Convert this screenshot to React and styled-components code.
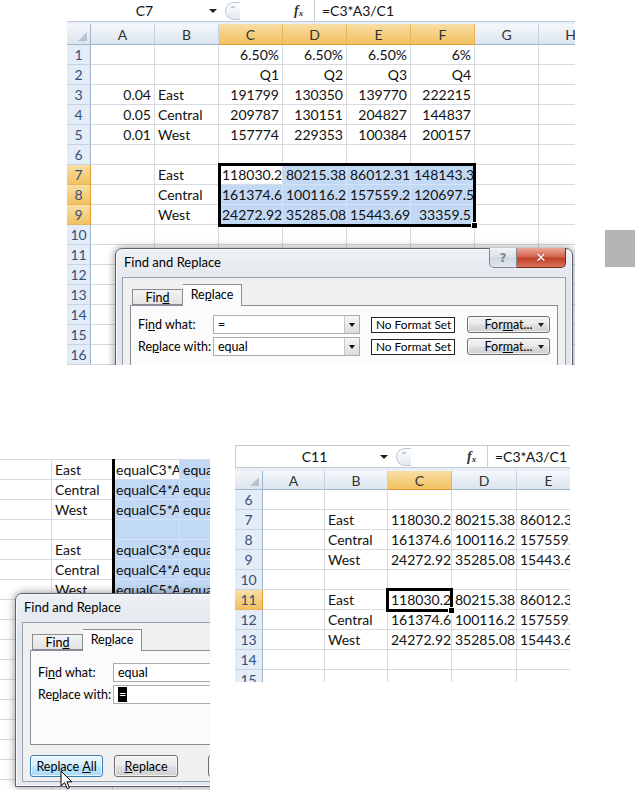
import React from 'react';
import styled, { createGlobalStyle } from 'styled-components';

const GlobalStyle = createGlobalStyle`
  *, *::before, *::after { box-sizing: border-box; }
  html, body { margin: 0; padding: 0; background: #fff; }
  body { font-family: Lato, "Open Sans", sans-serif; }
`;

const Page = styled.div`
  width: 635px;
  height: 790px;
  overflow: hidden;
  background: #fff;
`;

const TopRow = styled.div`
  display: flex;
  align-items: flex-start;
`;

const BottomRow = styled.div`
  display: flex;
  align-items: flex-start;
  margin-top: 80px;
`;

const Shot = styled.div`
  position: relative;
  overflow: hidden;
  flex: none;
  width: ${p => p.$w}px;
  height: ${p => p.$h}px;
  margin-left: ${p => p.$ml || 0}px;
  margin-top: ${p => p.$mt || 0}px;
  background: #e9eef4;
`;

const GrayBlock = styled.div`
  flex: none;
  width: 30px;
  height: 37px;
  margin: 230px 0 0 30px;
  background: #b4b4b4;
`;

/* formula bar */
const FormulaBar = styled.div`
  display: flex;
  align-items: center;
  height: ${p => (p.$framed ? 23 : 22)}px;
  margin-bottom: ${p => (p.$framed ? 3 : 2)}px;
  background: #fff;
  border-top: ${p => (p.$framed ? '1px solid #c3cbd6' : 'none')};
  border-left: ${p => (p.$framed ? '1px solid #c3cbd6' : 'none')};
  border-bottom: 1px solid #c3cbd6;
  font-size: 14px;
  color: #111;
`;

const NameBox = styled.div`
  position: relative;
  flex: none;
  width: ${p => p.$w}px;
  height: 100%;
  display: flex;
  align-items: center;
  justify-content: center;
`;

const NameArrow = styled.span`
  position: absolute;
  right: 5px;
  top: 9px;
  border-left: 4px solid transparent;
  border-right: 4px solid transparent;
  border-top: 4px solid #222;
`;

const Knob = styled.div`
  flex: none;
  width: 15px;
  height: 18px;
  margin-left: 3px;
  border: 1px solid #b9c7d8;
  border-right: none;
  border-radius: 10px 0 0 10px;
  background: linear-gradient(#fdfeff, #e3e9f0);
  position: relative;

  &::after {
    content: '';
    position: absolute;
    left: 5px;
    top: 3px;
    width: 4px;
    height: 2px;
    background: #c3ccd6;
  }
`;

const Fx = styled.div`
  flex: none;
  margin-left: ${p => p.$gap}px;
  width: 16px;
  font-family: "Liberation Serif", serif;
  font-style: italic;
  font-weight: bold;
  font-size: 14px;
  color: #333;

  sub {
    font-size: 9px;
    vertical-align: -1px;
  }
`;

const BarSep = styled.div`
  flex: none;
  width: 1px;
  height: 100%;
  margin: 0 7px 0 4px;
  background: #c8d0da;
`;

/* grid */
const Grid = styled.div`
  position: relative;
  display: grid;
  grid-template-columns: ${p => p.$cols};
  grid-template-rows: ${p => (p.$headH ? `${p.$headH}px` : 'none')};
  grid-auto-rows: 20px;
  border-top: ${p => (p.$headH ? 'none' : '1px solid #d7dadf')};
  background: #fff;
`;

const Corner = styled.div`
  position: relative;
  background: linear-gradient(#f3f6fa, #dde4ee);
  border-right: 1px solid #9eb6ce;
  border-bottom: 1px solid #9eb6ce;

  &::after {
    content: '';
    position: absolute;
    right: 3px;
    bottom: 3px;
    border-left: 9px solid transparent;
    border-bottom: 9px solid #b7c3d1;
  }
`;

const ColHead = styled.div`
  display: flex;
  align-items: center;
  justify-content: center;
  font-size: 14px;
  color: #333;
  background: ${p => (p.$sel ? 'linear-gradient(#f9dea6, #f1c15f)' : 'linear-gradient(#f5f8fc, #dce4ee)')};
  border-right: 1px solid ${p => (p.$sel ? '#e7b45a' : '#c6d3e2')};
  border-bottom: 1px solid ${p => (p.$sel ? '#e29d2e' : '#9eb6ce')};
`;

const RowHead = styled.div`
  display: flex;
  align-items: center;
  justify-content: center;
  font-size: 14px;
  line-height: 19px;
  color: #34507a;
  background: ${p => (p.$sel ? 'linear-gradient(#f9dea6, #f1c15f)' : '#e4ecf7')};
  border-right: 1px solid ${p => (p.$sel ? '#e29d2e' : '#9eb6ce')};
  border-bottom: 1px solid ${p => (p.$sel ? '#e7b45a' : '#c6d3e2')};
`;

const Cell = styled.div`
  padding: 0 3px;
  font-size: 14px;
  line-height: 19px;
  color: #111;
  white-space: nowrap;
  overflow: hidden;
  text-align: ${p => (p.$left ? 'left' : 'right')};
  background: ${p => (p.$fill ? '#c2d9f5' : '#fff')};
  border-right: 1px solid ${p => (p.$fill ? '#d4e3f6' : '#d7dadf')};
  border-bottom: 1px solid ${p => (p.$fill ? '#d4e3f6' : '#d7dadf')};
`;

const SelBox = styled.div`
  position: absolute;
  left: ${p => p.$x}px;
  top: ${p => p.$y}px;
  width: ${p => p.$w}px;
  height: ${p => p.$h}px;
  border: 3px solid #000;
  pointer-events: none;
`;

const Handle = styled.div`
  position: absolute;
  right: -5px;
  bottom: -5px;
  width: 7px;
  height: 7px;
  background: #000;
  border: 1px solid #fff;
`;

/* dialog */
const Dialog = styled.div`
  position: absolute;
  left: ${p => p.$x}px;
  top: ${p => p.$y}px;
  width: ${p => p.$w}px;
  height: ${p => p.$h}px;
  display: flex;
  flex-direction: column;
  padding: 0 6px 4px 6px;
  border: 1px solid #5b6470;
  border-radius: 7px 7px 0 0;
  background: linear-gradient(#eef1f5, #dfe5ec 40px, #e4e9ef);
  box-shadow: 0 0 9px rgba(0, 0, 0, 0.45), inset 0 0 0 1px #f7f9fb;
  font-family: Lato, "Open Sans", sans-serif;
  font-size: 12.5px;
  color: #000;
`;

const TitleBar = styled.div`
  flex: none;
  display: flex;
  align-items: flex-start;
  height: 28px;
`;

const Title = styled.div`
  padding: 5px 0 0 2px;
  font-size: 13px;
`;

const CaptionButtons = styled.div`
  display: flex;
  margin: -1px 0 0 auto;
`;

const CapButton = styled.div`
  width: ${p => p.$w}px;
  height: 20px;
  display: flex;
  align-items: center;
  justify-content: center;
  border: 1px solid ${p => (p.$close ? '#7d2a1c' : '#7f8894')};
  border-top: none;
  border-left-width: ${p => (p.$close ? 0 : 1)}px;
  border-radius: ${p => (p.$close ? '0 0 5px 0' : '0 0 0 5px')};
  background: ${p =>
    p.$close
      ? 'linear-gradient(#e9a99b, #d5654f 45%, #c2412a 55%, #d7735a)'
      : 'linear-gradient(#f2f5f8, #dde3ea 45%, #cfd7e0 55%, #e2e8ee)'};
  color: ${p => (p.$close ? '#fff' : '#7a8794')};
  font-family: "DejaVu Sans", sans-serif;
  font-weight: bold;
  font-size: ${p => (p.$close ? 13 : 12)}px;
  text-shadow: ${p => (p.$close ? '0 0 2px #7d2a1c' : 'none')};
`;

const Client = styled.div`
  flex: 1;
  display: flex;
  flex-direction: column;
  padding: 0 7px;
  background: #f0f0f0;
  border: 1px solid #98a2ae;
`;

const TabStrip = styled.div`
  flex: none;
  display: flex;
  align-items: flex-end;
  height: 27px;
  padding-left: 2px;
  position: relative;
  z-index: 1;
`;

const Tab = styled.div`
  display: flex;
  align-items: center;
  justify-content: center;
  width: ${p => p.$w}px;
  height: ${p => (p.$active ? 22 : 16)}px;
  margin-bottom: ${p => (p.$active ? -1 : 0)}px;
  padding-bottom: ${p => (p.$active ? 2 : 0)}px;
  border: 1px solid #898c95;
  border-bottom: ${p => (p.$active ? 'none' : '1px solid #898c95')};
  border-left-width: ${p => (p.$active ? 0 : 1)}px;
  background: ${p => (p.$active ? '#fbfbfb' : 'linear-gradient(#f3f3f3, #e3e3e3)')};
`;

const Panel = styled.div`
  flex: none;
  height: ${p => p.$h}px;
  padding: ${p => p.$pt}px 7px 0 7px;
  background: #fbfbfb;
  border: 1px solid #898c95;
  display: flex;
  flex-direction: column;
  gap: 3px;
`;

const FormRow = styled.div`
  display: flex;
  align-items: center;
  height: 19px;
  white-space: nowrap;
`;

const Label = styled.div`
  flex: none;
  width: 75px;
`;

const Field = styled.div`
  flex: none;
  display: flex;
  align-items: center;
  width: ${p => p.$w}px;
  height: 19px;
  padding-left: 4px;
  border: 1px solid #abadb3;
  background: #fff;
  overflow: hidden;
`;

const FieldText = styled.span`
  flex: 1;
`;

const Picked = styled.span`
  background: #000;
  color: #fff;
  padding: 0 1px;
  line-height: 14px;
`;

const DropBtn = styled.div`
  flex: none;
  width: 15px;
  height: 100%;
  display: flex;
  align-items: center;
  justify-content: center;
  border-left: 1px solid #c5c9cf;
  background: linear-gradient(#f4f4f4, #dcdcdc);
`;

const Tri = styled.span`
  border-left: 3.5px solid transparent;
  border-right: 3.5px solid transparent;
  border-top: 4px solid #111;
`;

const NoFormat = styled.div`
  flex: none;
  width: 84px;
  height: 16px;
  margin-left: 11px;
  padding-left: 4px;
  font-size: 11.8px;
  line-height: 14px;
  border: 1px solid #222;
  background: #fff;
  white-space: nowrap;
  overflow: hidden;
`;

const Button = styled.div`
  flex: none;
  position: relative;
  display: flex;
  align-items: center;
  justify-content: center;
  width: ${p => p.$w}px;
  height: ${p => p.$h || 22}px;
  margin-left: ${p => p.$ml || 0}px;
  border: 1px solid ${p => (p.$hot ? '#3c7fb1' : '#707070')};
  border-radius: 3px;
  background: ${p =>
    p.$hot
      ? 'linear-gradient(#eaf6fd, #d9f0fc 45%, #bee6fd 55%, #a7d9f5)'
      : 'linear-gradient(#f2f2f2, #ebebeb 45%, #dddddd 55%, #cfcfcf)'};
  box-shadow: inset 0 0 0 1px rgba(255, 255, 255, 0.7);
  white-space: pre;
`;

const ButtonArrow = styled.span`
  position: absolute;
  right: 5px;
  top: 6px;
  border-left: 3px solid transparent;
  border-right: 3px solid transparent;
  border-top: 4px solid #222;
`;

const ButtonRow = styled.div`
  display: flex;
  margin-top: 10px;
`;

const Cursor = styled.svg`
  position: absolute;
  left: ${p => p.$x}px;
  top: ${p => p.$y}px;
`;

/* data */
const LEFT_TEXT = /^(East|Central|West|equal)/;

function Sheet({ cols, rowHeadW, headH, rows, children }) {
  const template = `${rowHeadW ? `${rowHeadW}px ` : ''}${cols.map(c => `${c.w}px`).join(' ')}`;
  return (
    <Grid $cols={template} $headH={headH}>
      {headH ? (
        <>
          <Corner />
          {cols.map(c => (
            <ColHead key={c.label} $sel={c.sel}>{c.label}</ColHead>
          ))}
        </>
      ) : null}
      {rows.map(r => (
        <React.Fragment key={r.n}>
          {rowHeadW ? <RowHead $sel={r.sel}>{r.n}</RowHead> : null}
          {r.cells.map((c, i) => (
            <Cell key={i} $left={LEFT_TEXT.test(c.t)} $fill={c.fill}>{c.t}</Cell>
          ))}
        </React.Fragment>
      ))}
      {children}
    </Grid>
  );
}

const topCols = ['A', 'B', 'C', 'D', 'E', 'F', 'G', 'H'].map((label, i) => ({
  label,
  w: 64,
  sel: i >= 2 && i <= 5,
}));

const topValues = {
  1: ['', '', '6.50%', '6.50%', '6.50%', '6%'],
  2: ['', '', 'Q1', 'Q2', 'Q3', 'Q4'],
  3: ['0.04', 'East', '191799', '130350', '139770', '222215'],
  4: ['0.05', 'Central', '209787', '130151', '204827', '144837'],
  5: ['0.01', 'West', '157774', '229353', '100384', '200157'],
  7: ['', 'East', '118030.2', '80215.38', '86012.31', '148143.3'],
  8: ['', 'Central', '161374.6', '100116.2', '157559.2', '120697.5'],
  9: ['', 'West', '24272.92', '35285.08', '15443.69', '33359.5'],
};

const topRows = Array.from({ length: 16 }, (_, i) => {
  const n = i + 1;
  const v = topValues[n] || [];
  const sel = n >= 7 && n <= 9;
  return {
    n,
    sel,
    cells: topCols.map((_, c) => ({
      t: v[c] || '',
      fill: sel && c >= 2 && c <= 5 && !(n === 7 && c === 2),
    })),
  };
});

const brCols = [
  { label: 'A', w: 62 },
  { label: 'B', w: 63 },
  { label: 'C', w: 64, sel: true },
  { label: 'D', w: 65 },
  { label: 'E', w: 64 },
];

const block = {
  East: ['', 'East', '118030.2', '80215.38', '86012.31'],
  Central: ['', 'Central', '161374.6', '100116.2', '157559.2'],
  West: ['', 'West', '24272.92', '35285.08', '15443.69'],
};
const brValues = { 7: block.East, 8: block.Central, 9: block.West, 11: block.East, 12: block.Central, 13: block.West };

const brRows = Array.from({ length: 10 }, (_, i) => {
  const n = i + 6;
  const v = brValues[n] || [];
  return { n, sel: n === 11, cells: brCols.map((_, c) => ({ t: v[c] || '' })) };
});

const blCols = [{ w: 52 }, { w: 61 }, { w: 67 }, { w: 64 }];
const blValues = [
  ['', 'East', 'equalC3*A3/C1', 'equalD3*A3/D1'],
  ['', 'Central', 'equalC4*A4/C1', 'equalD4*A4/D1'],
  ['', 'West', 'equalC5*A5/C1', 'equalD5*A5/D1'],
  [],
  ['', 'East', 'equalC3*A3/C1', 'equalD3*A3/D1'],
  ['', 'Central', 'equalC4*A4/C1', 'equalD4*A4/D1'],
  ['', 'West', 'equalC5*A5/C1', 'equalD5*A5/D1'],
];
const blRows = Array.from({ length: 17 }, (_, i) => {
  const v = blValues[i] || [];
  return {
    n: i,
    cells: blCols.map((_, c) => ({
      t: v[c] || '',
      fill: i <= 6 && c >= 2 && !(i === 0 && c === 2),
    })),
  };
});

function Bar({ name, nameW, fxGap, formula, framed }) {
  return (
    <FormulaBar $framed={framed}>
      <NameBox $w={nameW}>
        {name}
        <NameArrow />
      </NameBox>
      <Knob />
      <Fx $gap={fxGap}>
        f<sub>x</sub>
      </Fx>
      <BarSep />
      {formula}
    </FormulaBar>
  );
}

function FindReplace({ x, y, w, h, caption, panelH, panelTop, findText, replaceText, formats, buttons }) {
  return (
    <Dialog $x={x} $y={y} $w={w} $h={h}>
      <TitleBar>
        <Title>Find and Replace</Title>
        {caption ? (
          <CaptionButtons>
            <CapButton $w={28}>?</CapButton>
            <CapButton $w={49} $close>✕</CapButton>
          </CaptionButtons>
        ) : null}
      </TitleBar>
      <Client>
        <TabStrip>
          <Tab $w={51}>
            Fin<u>d</u>
          </Tab>
          <Tab $w={59} $active>
            Re<u>p</u>lace
          </Tab>
        </TabStrip>
        <Panel $h={panelH} $pt={panelTop}>
          <FormRow>
            <Label>
              Fi<u>n</u>d what:
            </Label>
            <Field $w={formats ? 147 : 200}>
              <FieldText>{findText}</FieldText>
              {formats ? (
                <DropBtn>
                  <Tri />
                </DropBtn>
              ) : null}
            </Field>
            {formats ? (
              <>
                <NoFormat>No Format Set</NoFormat>
                <Button $w={83} $h={17} $ml={12}>
                  For<u>m</u>at...
                  <ButtonArrow />
                </Button>
              </>
            ) : null}
          </FormRow>
          <FormRow>
            <Label>
              Re<u>p</u>lace with:
            </Label>
            <Field $w={formats ? 147 : 200}>
              <FieldText>{replaceText}</FieldText>
              {formats ? (
                <DropBtn>
                  <Tri />
                </DropBtn>
              ) : null}
            </Field>
            {formats ? (
              <>
                <NoFormat>No Format Set</NoFormat>
                <Button $w={83} $h={17} $ml={12}>
                  For<u>m</u>at...
                  <ButtonArrow />
                </Button>
              </>
            ) : null}
          </FormRow>
        </Panel>
        {buttons ? (
          <ButtonRow>
            <Button $w={73} $hot>
              {'Replace '}
              <u>A</u>ll
            </Button>
            <Button $w={64} $ml={11}>
              <u>R</u>eplace
            </Button>
            <Button $w={64} $ml={30}>
              F<u>i</u>nd All
            </Button>
          </ButtonRow>
        ) : null}
      </Client>
    </Dialog>
  );
}

export default function App() {
  return (
    <Page>
      <GlobalStyle />
      <TopRow>
        <Shot $w={508} $h={365} $ml={67}>
          <Bar name="C7" nameW={155} fxGap={54} formula="=C3*A3/C1" />
          <Sheet cols={topCols} rowHeadW={24} headH={21} rows={topRows}>
            <SelBox $x={151} $y={139} $w={258} $h={64}>
              <Handle />
            </SelBox>
          </Sheet>
          <FindReplace
            x={48}
            y={248}
            w={458}
            h={160}
            caption
            formats
            panelH={80}
            panelTop={9}
            findText="="
            replaceText="equal"
          />
        </Shot>
        <GrayBlock />
      </TopRow>
      <BottomRow>
        <Shot $w={210} $h={331} $mt={14}>
          <Sheet cols={blCols} rows={blRows}>
            <SelBox $x={112} $y={-4} $w={140} $h={145} />
          </Sheet>
          <FindReplace
            x={15}
            y={134}
            w={262}
            h={194}
            panelH={95}
            panelTop={12}
            findText="equal"
            replaceText={<Picked>=</Picked>}
            buttons
          />
          <Cursor $x={60} $y={311} width="13" height="20" viewBox="0 0 13 20">
            <path
              d="M1 1 L1 16 L4.6 12.6 L7.2 18.6 L9.4 17.6 L6.9 11.8 L11.8 11.8 Z"
              fill="#fff"
              stroke="#000"
              strokeWidth="1"
              strokeLinejoin="round"
            />
          </Cursor>
        </Shot>
        <Shot $w={335} $h={237} $ml={25}>
          <Bar name="C11" nameW={157} fxGap={56} formula="=C3*A3/C1" framed />
          <Sheet cols={brCols} rowHeadW={28} headH={19} rows={brRows}>
            <SelBox $x={151} $y={117} $w={67} $h={24}>
              <Handle />
            </SelBox>
          </Sheet>
        </Shot>
      </BottomRow>
    </Page>
  );
}
